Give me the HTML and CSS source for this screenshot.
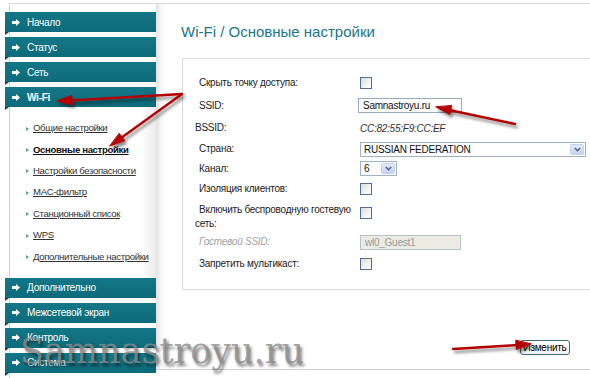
FILE: index.html
```html
<!DOCTYPE html>
<html lang="ru">
<head>
<meta charset="utf-8">
<title>Wi-Fi / Основные настройки</title>
<link rel="stylesheet" href="styles.css">
</head>
<body>
<div class="page">
  <aside class="sidebar">
    <nav class="menu">
      <a class="bar"><svg class="bar-ico" viewBox="0 0 8 7"><path d="M0 2H4V0L8 3.5L4 7V5H0Z"/></svg>Начало</a>
      <a class="bar"><svg class="bar-ico" viewBox="0 0 8 7"><path d="M0 2H4V0L8 3.5L4 7V5H0Z"/></svg>Статус</a>
      <a class="bar"><svg class="bar-ico" viewBox="0 0 8 7"><path d="M0 2H4V0L8 3.5L4 7V5H0Z"/></svg>Сеть</a>
      <a class="bar bar-active"><svg class="bar-ico" viewBox="0 0 8 7"><path d="M0 2H4V0L8 3.5L4 7V5H0Z"/></svg>Wi-Fi</a>
      <ul class="submenu">
        <li class="sub-item"><a>Общие настройки</a></li>
        <li class="sub-item sub-current"><a>Основные настройки</a></li>
        <li class="sub-item"><a>Настройки безопасности</a></li>
        <li class="sub-item"><a>MAC-фильтр</a></li>
        <li class="sub-item"><a>Станционный список</a></li>
        <li class="sub-item"><a>WPS</a></li>
        <li class="sub-item"><a>Дополнительные настройки</a></li>
      </ul>
      <a class="bar"><svg class="bar-ico" viewBox="0 0 8 7"><path d="M0 2H4V0L8 3.5L4 7V5H0Z"/></svg>Дополнительно</a>
      <a class="bar"><svg class="bar-ico" viewBox="0 0 8 7"><path d="M0 2H4V0L8 3.5L4 7V5H0Z"/></svg>Межсетевой экран</a>
      <a class="bar"><svg class="bar-ico" viewBox="0 0 8 7"><path d="M0 2H4V0L8 3.5L4 7V5H0Z"/></svg>Контроль</a>
      <a class="bar"><svg class="bar-ico" viewBox="0 0 8 7"><path d="M0 2H4V0L8 3.5L4 7V5H0Z"/></svg>Система</a>
    </nav>
  </aside>

  <main class="content">
    <h1 class="title">Wi-Fi / Основные настройки</h1>
    <section class="panel">
      <div class="row row-a">
        <div class="label ind">Скрыть точку доступа:</div>
        <div class="value"><span class="checkbox"></span></div>
      </div>
      <div class="row row-b">
        <div class="label ind">SSID:</div>
        <div class="value"><span class="input input-ssid">Samnastroyu.ru</span></div>
      </div>
      <div class="row row-c">
        <div class="label">BSSID:</div>
        <div class="value"><span class="mac">CC:82:55:F9:CC:EF</span></div>
      </div>
      <div class="row row-d">
        <div class="label ind">Страна:</div>
        <div class="value"><span class="select select-country"><span class="select-text">RUSSIAN FEDERATION</span><span class="select-btn"><svg viewBox="0 0 9 6"><path d="M1 1L4.5 4.5L8 1" /></svg></span></span></div>
      </div>
      <div class="row row-e">
        <div class="label ind">Канал:</div>
        <div class="value"><span class="select select-channel"><span class="select-text">6</span><span class="select-btn"><svg viewBox="0 0 9 6"><path d="M1 1L4.5 4.5L8 1" /></svg></span></span></div>
      </div>
      <div class="row row-f">
        <div class="label ind">Изоляция клиентов:</div>
        <div class="value"><span class="checkbox"></span></div>
      </div>
      <div class="row row-g">
        <div class="label ind label-wrap">Включить беспроводную гостевую сеть:</div>
        <div class="value"><span class="checkbox checkbox-top"></span></div>
      </div>
      <div class="row row-h">
        <div class="label ind label-disabled">Гостевой SSID:</div>
        <div class="value"><span class="input input-guest">wl0_Guest1</span></div>
      </div>
      <div class="row row-i">
        <div class="label ind">Запретить мультикаст:</div>
        <div class="value"><span class="checkbox"></span></div>
      </div>
    </section>
    <div class="actions"><button class="btn">Изменить</button></div>
  </main>

  <svg class="arrows" viewBox="0 0 590 378" width="590" height="378">
    <defs>
      <filter id="sh" x="-20%" y="-50%" width="140%" height="200%">
        <feDropShadow dx="2" dy="3" stdDeviation="1.6" flood-color="#000" flood-opacity="0.45"/>
      </filter>
    </defs>
    <g filter="url(#sh)" fill="#b40000" stroke="#b40000" stroke-linecap="round">
      <line x1="182" y1="94" x2="70" y2="100.5" stroke-width="2.4"/>
      <polygon points="57,101 72.3,105 71.7,95.8" stroke-width="1"/>
      <line x1="182" y1="94" x2="121" y2="138" stroke-width="2.4"/>
      <polygon points="110,146 124.8,140.7 119.4,133.5" stroke-width="1"/>
      <line x1="515" y1="124" x2="449" y2="110" stroke-width="2.4"/>
      <polygon points="436,107 449.8,114.6 451.6,105.8" stroke-width="1"/>
      <line x1="453" y1="349" x2="518" y2="345" stroke-width="2.4"/>
      <polygon points="531,344 516.3,349.5 515.7,340.5" stroke-width="1"/>
    </g>
  </svg>
  <div class="watermark">Samnastroyu.ru</div>
</div>
</body>
</html>
```

FILE: styles.css
```css
* { box-sizing: border-box; }
html, body { margin: 0; padding: 0; background: #fff; }
body { font-family: "Liberation Sans", Arial, sans-serif; font-size: 10px; letter-spacing: -0.25px; color: #222; }

.page {
  position: relative;
  width: 590px;
  height: 378px;
  overflow: hidden;
  display: flex;
  align-items: flex-start;
}

/* ---------- sidebar ---------- */
.sidebar {
  flex: none;
  width: 147px;
  margin-left: 9px;
  margin-top: 3px;
  border-top: 1px solid #dadada;
  border-left: 1px solid #d2d2d2;
  padding-top: 8px;
}
.menu { display: flex; flex-direction: column; }
.bar {
  position: relative;
  display: flex;
  align-items: center;
  height: 20px;
  width: 151px;
  margin-left: -5px;
  margin-bottom: 5px;
  padding-left: 7px;
  background: linear-gradient(#137787, #0d6b7a);
  color: #fff;
  font-size: 10px;
  white-space: nowrap;
  text-decoration: none;
}
.bar::after {
  content: "";
  position: absolute;
  left: 0;
  top: 100%;
  border-top: 3px solid #06434c;
  border-right: 4px solid transparent;
}
.bar-ico { width: 8px; height: 7px; fill: #fff; margin-right: 7px; flex: none; }
.bar-active { font-weight: bold; margin-bottom: 0; }

.submenu {
  list-style: none;
  margin: 0;
  padding: 10px 0 11px 16px;
  background: linear-gradient(to right, #fff 90%, #ebebeb);
}
.sub-item {
  display: flex;
  align-items: center;
  height: 21.4px;
  color: #333;
  font-size: 9.6px;
  letter-spacing: -0.35px;
  white-space: nowrap;
}
.sub-item::before {
  content: "";
  width: 0; height: 0;
  border-left: 3px solid #5f9aa6;
  border-top: 2px solid transparent;
  border-bottom: 2px solid transparent;
  margin-right: 4px;
  margin-top: 2px;
}
.sub-item a { color: #333; text-decoration: underline; }
.sub-current a { font-weight: bold; color: #111; }

/* ---------- content ---------- */
.content {
  flex: 1;
  margin-top: 3px;
  height: 367px;
  border-top: 1px solid #dadada;
  border-bottom: 1px solid #cfcfcf;
  padding-left: 25px;
  background: linear-gradient(to right, #e2e2e2, #f6f6f6 5px, #fff 10px);
  display: flex;
  flex-direction: column;
}
.title {
  margin: 19px 0 0;
  font-size: 15px;
  line-height: 18px;
  font-weight: normal;
  letter-spacing: 0;
  color: #1b7686;
}
.panel {
  margin: 17px -20px 0 1px;
  border: 1px solid #dcdcdc;
  padding: 12px 0 13px 12px;
  background: #fff;
}
.row { display: flex; align-items: center; }
.row-a { height: 23px; }
.row-b { height: 23px; }
.row-c { height: 22px; }
.row-d { height: 20px; }
.row-e { height: 19px; }
.row-f { height: 21px; }
.row-g { height: 33px; align-items: flex-start; padding-top: 4px; }
.row-h { height: 20px; }
.row-i { height: 24px; }

.label { width: 165px; flex: none; line-height: 14px; color: #222; }
.ind { text-indent: 4px; }
.label-wrap { padding-right: 2px; }
.label-disabled { font-style: italic; color: #a0a0a0; }
.value { display: flex; align-items: center; }

.checkbox {
  display: block;
  width: 12px; height: 12px;
  border: 1px solid #4f6f8f;
  background: linear-gradient(135deg, #dcdcd6, #fbfbfb 80%);
}
.checkbox-top { margin-top: 4px; }

.input {
  display: flex;
  align-items: center;
  height: 15px;
  padding-left: 4px;
  border: 1px solid #95acc4;
  background: #fff;
  color: #111;
}
.input-ssid { width: 104px; margin-left: -2px; }
.input-guest { width: 101px; background: #ecebe3; border-color: #b3c3d3; color: #9a9a9a; }

.mac { font-style: italic; color: #333; }

.select {
  display: flex;
  align-items: center;
  height: 15px;
  border: 1px solid #9fb3c8;
  background: #fff;
  padding: 0 1px 0 3px;
}
.select-text { flex: 1; color: #111; }
.select-country { width: 226px; }
.select-channel { width: 37px; }
.select-btn {
  width: 14px; height: 11px;
  display: flex; align-items: center; justify-content: center;
  border: 1px solid #c4d3ec;
  border-radius: 2px;
  background: linear-gradient(#e4ecfb, #c2d3f2);
}
.select-btn svg { width: 7px; height: 5px; fill: none; stroke: #4a5f86; stroke-width: 1.8; }

.actions { display: flex; justify-content: flex-end; padding-right: 20px; margin-top: 50px; }
.btn {
  width: 50px;
  height: 15px;
  padding: 0;
  border: 1px solid #3f6b78;
  border-radius: 3px;
  background: linear-gradient(#ffffff, #eef1f1);
  font-family: "Liberation Sans", Arial, sans-serif;
  font-size: 10px;
  letter-spacing: -0.25px;
  color: #000;
}

/* ---------- overlays ---------- */
.arrows { position: absolute; left: 0; top: 0; pointer-events: none; }
.watermark {
  position: absolute;
  left: 20px;
  top: 331px;
  font-family: "DejaVu Serif", "Liberation Serif", serif;
  font-size: 35px;
  line-height: 40px;
  letter-spacing: 0;
  color: rgba(140, 140, 140, 0.8);
  text-shadow: 2px 3px 3px rgba(0, 0, 0, 0.5);
  pointer-events: none;
  white-space: nowrap;
}
```
